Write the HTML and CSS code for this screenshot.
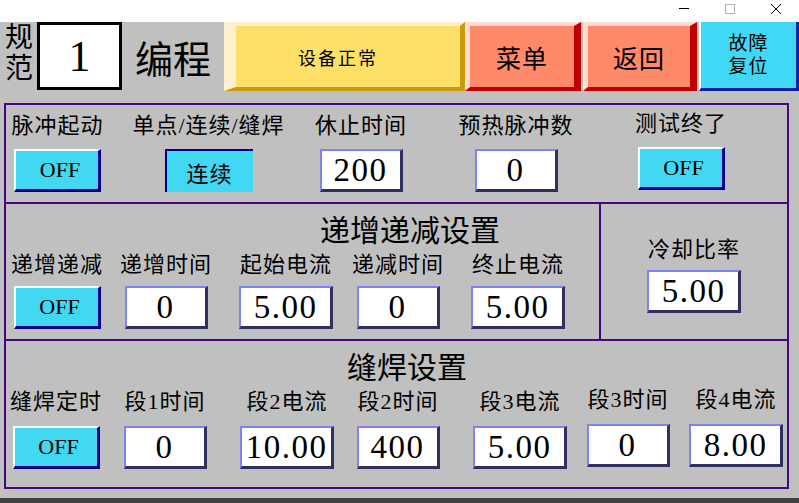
FILE: index.html
```html
<!DOCTYPE html>
<html lang="zh-CN">
<head>
  <meta charset="UTF-8">
  <meta name="viewport" content="width=device-width, initial-scale=1.0">
  <title>编程</title>
<link rel="stylesheet" href="styles.css">
</head>
<body>

  <div class="titlebar">
    <div class="win-btn">
      <svg width="10" height="10" viewBox="0 0 10 10"><path d="M0 4.5h10" stroke="#000" stroke-width="1"/></svg>
    </div>
    <div class="win-btn">
      <svg width="10" height="10" viewBox="0 0 10 10"><rect x="0.5" y="0.5" width="9" height="9" fill="none" stroke="#b4b4b4" stroke-width="1"/></svg>
    </div>
    <div class="win-btn">
      <svg width="10" height="10" viewBox="0 0 10 10"><path d="M0 0L10 10M10 0L0 10" stroke="#000" stroke-width="1"/></svg>
    </div>
  </div>

  <div class="topbar">
    <div class="std-label">规<br>范</div>
    <div class="std-box">1</div>
    <div class="mode-title">编程</div>
    <div class="btn btn-status">设备正常</div>
    <div class="btn btn-menu">菜单</div>
    <div class="btn btn-menu btn-back">返回</div>
    <div class="btn btn-reset">故障<br>复位</div>
  </div>

  <div class="panel">
    <!-- basic settings -->
    <div class="row-main">
      <div class="field"><div class="label">脉冲起动</div><div class="toggle">OFF</div></div>
      <div class="field"><div class="label">单点/连续/缝焊</div><div class="toggle pressed">连续</div></div>
      <div class="field"><div class="label">休止时间</div><div class="value">200</div></div>
      <div class="field"><div class="label">预热脉冲数</div><div class="value">0</div></div>
      <div class="field raised"><div class="label">测试终了</div><div class="toggle">OFF</div></div>
    </div>

    <!-- ramp up / down -->
    <div class="ramp">
      <div class="ramp-main">
        <div class="sec-title ramp-title">递增递减设置</div>
        <div class="ramp-fields">
          <div class="field"><div class="label">递增递减</div><div class="toggle">OFF</div></div>
          <div class="field"><div class="label">递增时间</div><div class="value">0</div></div>
          <div class="field"><div class="label">起始电流</div><div class="value wide">5.00</div></div>
          <div class="field"><div class="label">递减时间</div><div class="value">0</div></div>
          <div class="field"><div class="label">终止电流</div><div class="value wide">5.00</div></div>
        </div>
      </div>
      <div class="cool">
        <div class="field"><div class="label">冷却比率</div><div class="value wide">5.00</div></div>
      </div>
    </div>

    <!-- seam welding segments -->
    <div class="seam">
      <div class="sec-title seam-title">缝焊设置</div>
      <div class="seam-fields">
        <div class="field"><div class="label">缝焊定时</div><div class="toggle">OFF</div></div>
        <div class="field"><div class="label">段1时间</div><div class="value">0</div></div>
        <div class="field"><div class="label">段2电流</div><div class="value wide">10.00</div></div>
        <div class="field"><div class="label">段2时间</div><div class="value">400</div></div>
        <div class="field"><div class="label">段3电流</div><div class="value wide">5.00</div></div>
        <div class="field raised"><div class="label">段3时间</div><div class="value">0</div></div>
        <div class="field raised"><div class="label">段4电流</div><div class="value wide">8.00</div></div>
      </div>
    </div>
  </div>

  <div class="taskbar"></div>

</body>
</html>
```

FILE: styles.css
```css
body {
  margin: 0;
  padding: 0;
  width: 799px;
  height: 503px;
  overflow: hidden;
  background: #c0c0c0;
  color: #000;
  font-family: "Liberation Serif", "Noto Sans CJK SC", serif;
}

/* window caption */
.titlebar {
  height: 22px;
  background: #fff;
  display: flex;
  justify-content: flex-end;
}

.win-btn {
  width: 46px;
  display: flex;
  justify-content: center;
  padding-top: 4px;
  box-sizing: border-box;
}

.win-btn svg {
  display: block;
}

/* header row */
.topbar {
  height: 69px;
  display: flex;
  padding-left: 5px;
}

.std-label {
  width: 32px;
  font-size: 28px;
  line-height: 31px;
}

.std-box {
  width: 85px;
  height: 68px;
  box-sizing: border-box;
  border: 3px solid #000;
  background: #fff;
  display: flex;
  align-items: center;
  justify-content: center;
  font-size: 44px;
}

.mode-title {
  width: 102px;
  box-sizing: border-box;
  padding-left: 13px;
  display: flex;
  align-items: center;
  font-size: 38px;
}

.btn {
  box-sizing: border-box;
  height: 69px;
  display: flex;
  align-items: center;
  justify-content: center;
  text-align: center;
  border-style: solid;
}

.btn-status {
  width: 241px;
  background: #fde068;
  border-width: 4px 5px 4px 12px;
  border-color: #fff0d0 #c89a10 #c89a10 #fff0d0;
  font-size: 18px;
  letter-spacing: 2px;
  padding-right: 20px;
}

.btn-menu {
  width: 116px;
  background: #fe8a6a;
  border-width: 4px 7px 4px 5px;
  border-color: #ffdcd0 #c00000 #c00000 #ffdcd0;
  font-size: 25px;
  letter-spacing: 1px;
}

.btn-back {
  width: 114px;
  margin-left: 2px;
}

.btn-reset {
  width: 100px;
  margin-left: 2px;
  background: #40d8f4;
  border-width: 0 3px 3px 2px;
  border-color: #40d8f4 #0020a0 #0020a0 #e8ffff;
  font-size: 19px;
  line-height: 23px;
  letter-spacing: 1px;
}

/* settings panel */
.panel {
  width: 785px;
  margin: 12px 0 0 4px;
  box-sizing: border-box;
  border: 2px solid #4a0480;
}

.field {
  display: flex;
  flex-direction: column;
  align-items: center;
  gap: 10px;
}

.field.raised {
  margin-top: -2px;
}

.label {
  font-size: 22px;
  line-height: 26px;
  letter-spacing: 1px;
  white-space: nowrap;
}

.sec-title {
  font-size: 30px;
  line-height: 34px;
  margin-bottom: 4px;
  white-space: nowrap;
}

.toggle {
  width: 87px;
  height: 43px;
  box-sizing: border-box;
  background: #42d8f2;
  border-style: solid;
  border-width: 2px 3px 3px 2px;
  border-color: #f0ffff #000090 #000090 #f0ffff;
  display: flex;
  align-items: center;
  justify-content: center;
  padding-left: 6px;
  font-size: 22px;
}

.toggle.pressed {
  width: 88px;
  border-width: 2px 0 0 2px;
  border-color: #000090 #42d8f2 #42d8f2 #000090;
  padding-left: 0;
  font-size: 22px;
  letter-spacing: 1px;
}

.value {
  width: 83px;
  height: 43px;
  box-sizing: border-box;
  background: #fff;
  border-style: solid;
  border-width: 2px 3px 3px 2px;
  border-color: #8080f8 #303060 #303060 #8080f8;
  display: flex;
  align-items: center;
  justify-content: center;
  font-size: 33px;
  letter-spacing: 1.5px;
}

.value.wide {
  width: 94px;
}

.row-main {
  height: 99px;
  box-sizing: border-box;
  padding-top: 8px;
  border-bottom: 2px solid #4a0480;
  display: grid;
  grid-template-columns: 103px 199px 106px 204px 126px;
  align-items: start;
}

.ramp {
  height: 137px;
  box-sizing: border-box;
  border-bottom: 2px solid #4a0480;
  display: flex;
}

.ramp-main {
  width: 593px;
  padding-top: 10px;
}

.ramp-title {
  padding-left: 314px;
}

.ramp-fields {
  display: grid;
  grid-template-columns: 102px 116px 124px 100px 140px;
}

.ramp .field {
  gap: 8px;
}

.cool {
  flex: 1;
  border-left: 2px solid #4a0480;
  padding-top: 33px;
}

.cool .field {
  gap: 7px;
}

.seam {
  height: 146px;
  box-sizing: border-box;
  padding-top: 10px;
}

.seam-title {
  padding-left: 341px;
}

.seam-fields {
  display: grid;
  grid-template-columns: 100px 118px 126px 96px 148px 68px 1fr;
  align-items: start;
}

.seam .field {
  gap: 11px;
}

.seam-fields .field:last-child {
  padding-left: 23px;
}

.taskbar {
  margin-top: 9px;
  height: 6px;
  background: #404040;
}
```
